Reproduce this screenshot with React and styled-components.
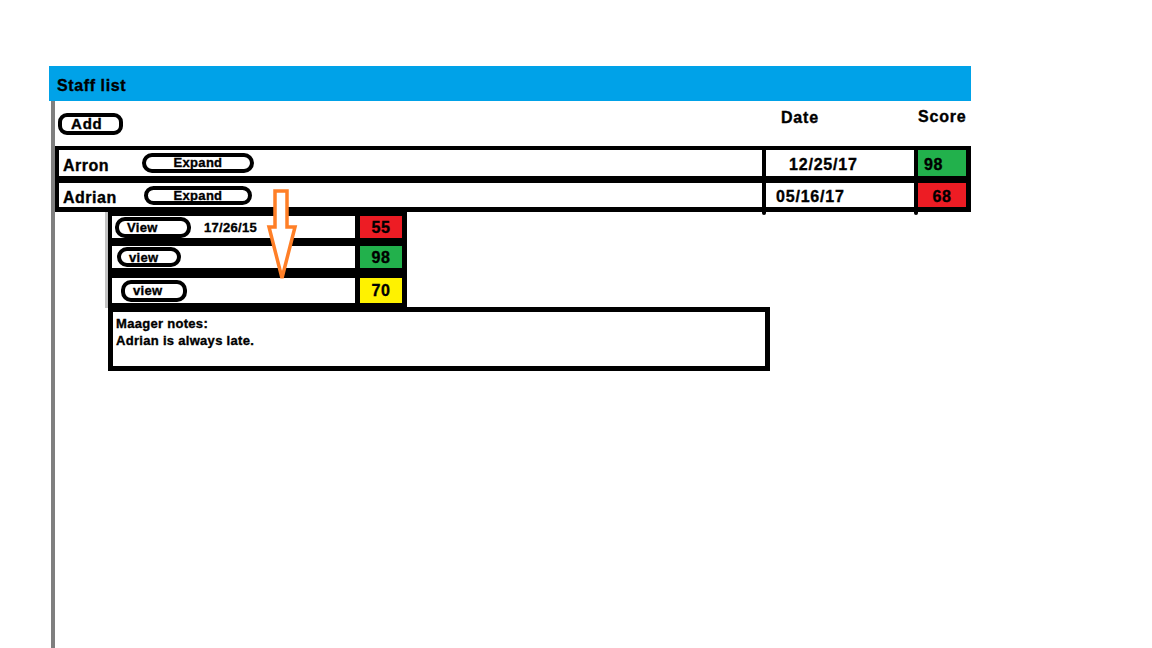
import React from 'react'
import styled, { createGlobalStyle } from 'styled-components'

const GlobalStyle = createGlobalStyle`
  html, body {
    margin: 0;
    padding: 0;
    background: #fff;
    overflow: hidden;
  }
  body {
    font-family: "Liberation Sans", Arial, sans-serif;
    color: #000;
    -webkit-text-stroke: 0.35px #000;
  }
`

const staff = [
  { name: 'Arron', date: '12/25/17', score: 98, color: '#22b14c', dateIndent: 23, scoreAlign: 'left', h: 26, btnW: 112, btnH: 20, btnGap: 0 },
  { name: 'Adrian', date: '05/16/17', score: 68, color: '#ed1c24', dateIndent: 10, scoreAlign: 'center', h: 24, btnW: 108, btnH: 19, btnGap: 2 },
]

const reviews = [
  { label: 'View', date: '17/26/15', score: 55, color: '#ed1c24', h: 22, mt: 0, btnW: 76, btnH: 21, btnX: 3, pad: 8 },
  { label: 'view', score: 98, color: '#22b14c', h: 22, mt: 0, btnW: 64, btnH: 20, btnX: 5, pad: 8 },
  { label: 'view', score: 70, color: '#fff200', h: 25, mt: 2, btnW: 66, btnH: 22, btnX: 9, pad: 8 },
]

const App = () => {
  return (
    <Page>
      <GlobalStyle />
      <Header>Staff list</Header>
      <Body>
        <Toolbar>
          <div>
            <AddButton>Add</AddButton>
          </div>
          <ColLabel indent={19} top={8}>Date</ColLabel>
          <ColLabel indent={0} top={7}>Score</ColLabel>
        </Toolbar>

        <Table>
          {staff.map((s, i) => (
            <Row key={s.name} h={s.h}>
              <NameCell>
                <Name>{s.name}</Name>
                <ExpandButton w={s.btnW} h={s.btnH} gap={s.btnGap}>Expand</ExpandButton>
              </NameCell>
              <DateCell indent={s.dateIndent} last={i === staff.length - 1}>
                {s.date}
              </DateCell>
              <ScoreCell color={s.color} align={s.scoreAlign}>{s.score}</ScoreCell>
            </Row>
          ))}
        </Table>

        <SubPanel>
          <SubTable>
            {reviews.map((r, i) => (
              <SubRow key={i} h={r.h} mt={r.mt}>
                <ReviewCell>
                  <ViewButton w={r.btnW} h={r.btnH} x={r.btnX} pad={r.pad}>{r.label}</ViewButton>
                  {r.date && <ReviewDate>{r.date}</ReviewDate>}
                </ReviewCell>
                <ScoreBox color={r.color}>{r.score}</ScoreBox>
              </SubRow>
            ))}
          </SubTable>
          <Notes>
            <div>Maager notes:</div>
            <div>Adrian is always late.</div>
          </Notes>
        </SubPanel>

        <Arrow width="36" height="95" viewBox="0 0 36 95">
          <polygon
            points="11,3 23,3 23,39 31,39 18,90 5,39 11,39"
            fill="#fff"
            stroke="#ff7f27"
            strokeWidth="3.5"
            strokeLinejoin="miter"
          />
        </Arrow>
      </Body>
    </Page>
  )
}

export default App

const Page = styled.div`
  padding: 66px 0 0 49px;
  height: 100vh;
  box-sizing: border-box;
`

const Header = styled.div`
  width: 922px;
  height: 35px;
  background-color: #00a2e8;
  box-sizing: border-box;
  padding: 5px 0 0 8px;
  display: flex;
  align-items: center;
  font-size: 16px;
  font-weight: 700;
  letter-spacing: 0.6px;
`

const Body = styled.div`
  position: relative;
  margin-left: 2px;
  width: 920px;
  height: 547px;
  border-left: 4px solid #7f7f7f;
  box-sizing: border-box;
`

const Toolbar = styled.div`
  display: grid;
  grid-template-columns: 707px 156px 1fr;
  height: 45px;
`

const AddButton = styled.div`
  margin: 12px 0 0 3px;
  width: 65px;
  height: 22px;
  border: 4px solid #000;
  border-radius: 9px;
  box-sizing: border-box;
  display: flex;
  align-items: center;
  padding-left: 9px;
  font-size: 15px;
  line-height: 14px;
  font-weight: 700;
  letter-spacing: 0.8px;
`

const ColLabel = styled.div`
  padding: ${({top}) => top}px 0 0 ${({indent}) => indent}px;
  font-size: 16px;
  line-height: 18px;
  font-weight: 700;
  letter-spacing: 0.8px;
`

const Table = styled.div`
  width: 916px;
  background: #000;
  padding: 4px 5px 5px 4px;
  box-sizing: border-box;
  display: flex;
  flex-direction: column;
  gap: 7px;
`

const Row = styled.div`
  display: grid;
  grid-template-columns: 703px 148px 48px;
  column-gap: 4px;
  height: ${({h}) => h}px;
`

const NameCell = styled.div`
  background: #fff;
  display: flex;
  align-items: center;
  padding-left: 4px;
`

const Name = styled.div`
  width: 79px;
  margin-top: 5px;
  font-size: 16px;
  font-weight: 700;
  letter-spacing: 0.5px;
`

const ExpandButton = styled.div`
  width: ${({w}) => w}px;
  height: ${({h}) => h}px;
  margin-left: ${({gap}) => gap}px;
  border: 4px solid #000;
  border-radius: 10px;
  box-sizing: border-box;
  display: flex;
  justify-content: center;
  align-items: flex-start;
  font-size: 13px;
  line-height: 12px;
  font-weight: 700;
  letter-spacing: 0.3px;
`

const DateCell = styled.div`
  position: relative;
  background: #fff;
  display: flex;
  align-items: center;
  padding: 4px 0 0 ${({indent}) => indent}px;
  font-size: 16px;
  font-weight: 700;
  letter-spacing: 0.8px;

  ${({last}) => last && `
    &::before, &::after {
      content: '';
      position: absolute;
      bottom: -8px;
      width: 4px;
      height: 8px;
      background: #000;
      border-radius: 0 0 2px 2px;
    }
    &::before { left: -4px; }
    &::after { right: -4px; }
  `}
`

const ScoreCell = styled.div`
  background: ${({color}) => color};
  display: flex;
  align-items: center;
  justify-content: ${({align}) => (align === 'left' ? 'flex-start' : 'center')};
  padding: 3px 0 0 ${({align}) => (align === 'left' ? '6px' : '0')};
  font-size: 16px;
  font-weight: 700;
  letter-spacing: 0.5px;
`

const SubPanel = styled.div`
  margin-left: 50px;
  display: flex;
  flex-direction: column;
  align-items: flex-start;
`

const SubTable = styled.div`
  border-left: 3px solid #c3c3c3;
  background: #000;
  padding: 4px 5px 5px 4px;
  display: flex;
  flex-direction: column;
  gap: 8px;
`

const SubRow = styled.div`
  display: flex;
  gap: 5px;
  height: ${({h}) => h}px;
  margin-top: ${({mt}) => mt}px;
`

const ReviewCell = styled.div`
  width: 243px;
  background: #fff;
  display: flex;
  align-items: center;
`

const ViewButton = styled.div`
  width: ${({w}) => w}px;
  height: ${({h}) => h}px;
  margin-left: ${({x}) => x}px;
  padding-left: ${({pad}) => pad}px;
  border: 4px solid #000;
  border-radius: 10px;
  box-sizing: border-box;
  display: flex;
  align-items: center;
  font-size: 13px;
  font-weight: 700;
  letter-spacing: 0.3px;
`

const ReviewDate = styled.div`
  margin-left: 13px;
  font-size: 13px;
  font-weight: 700;
  letter-spacing: 0.3px;
`

const ScoreBox = styled.div`
  width: 42px;
  background: ${({color}) => color};
  display: flex;
  align-items: center;
  justify-content: center;
  padding-top: 1px;
  font-size: 16px;
  font-weight: 700;
  letter-spacing: 0.5px;
`

const Notes = styled.div`
  margin: -1px 0 0 3px;
  width: 662px;
  height: 64px;
  border: 5px solid #000;
  box-sizing: border-box;
  padding: 3px 3px;
  font-size: 13px;
  line-height: 17px;
  font-weight: 700;
  letter-spacing: 0.3px;
`

const Arrow = styled.svg`
  position: absolute;
  left: 209px;
  top: 87px;
  z-index: 1;
`
